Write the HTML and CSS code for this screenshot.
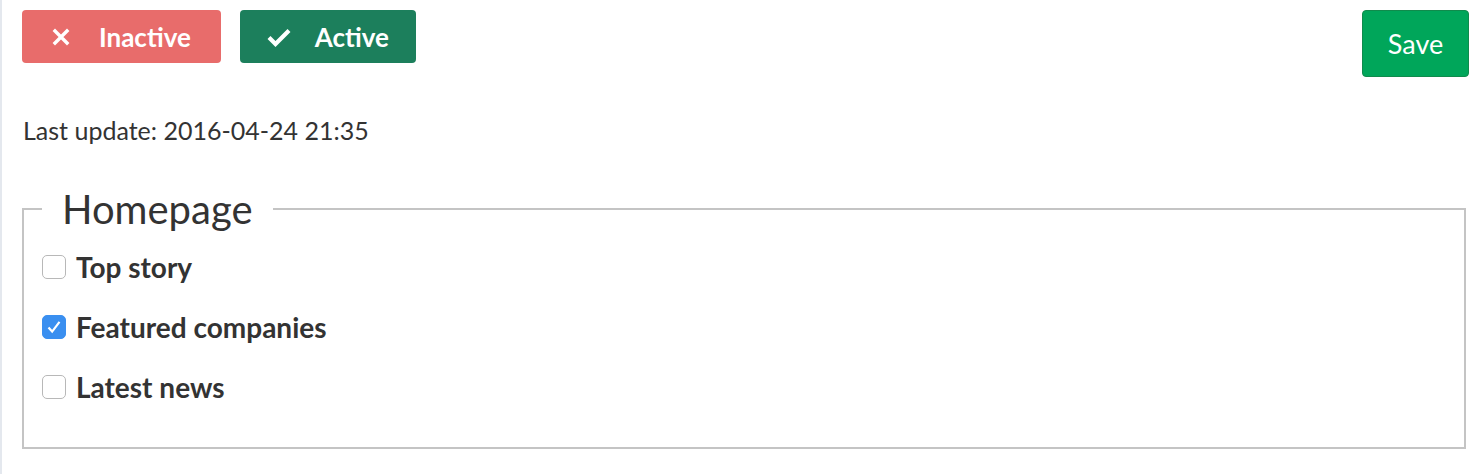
FILE: index.html
```html
<!DOCTYPE html>
<html lang="en">
<head>
    <meta charset="UTF-8">
    <meta name="viewport" content="width=device-width, initial-scale=1.0">
    <title>Homepage placement</title>
    <link rel="stylesheet" href="styles.css">
</head>
<body>
    <div class="page">
        <div class="toolbar">
            <div class="status-buttons">
                <button class="status inactive">
                    <svg class="icon" viewBox="0 0 18 18" width="18" height="18">
                        <path d="M3 3 L15 15 M15 3 L3 15" stroke="#fff" stroke-width="3.4" stroke-linecap="square" fill="none"/>
                    </svg>
                    <span>Inactive</span>
                </button>
                <button class="status active">
                    <svg class="icon" viewBox="0 0 24 20" width="24" height="20">
                        <path d="M2 10.5 L8.5 17 L22 3.5" stroke="#fff" stroke-width="4.2" stroke-linejoin="miter" fill="none"/>
                    </svg>
                    <span>Active</span>
                </button>
            </div>
            <button class="save">Save</button>
        </div>

        <p class="last-update">Last update: 2016-04-24 21:35</p>

        <fieldset class="placement">
            <legend>Homepage</legend>
            <label class="option"><input type="checkbox"> Top story</label>
            <label class="option"><input type="checkbox" checked> Featured companies</label>
            <label class="option"><input type="checkbox"> Latest news</label>
        </fieldset>
    </div>
</body>
</html>
```

FILE: styles.css
```css
/* General Styling */
body {
    margin: 0;
    padding: 0;
    font-family: Lato, "Open Sans", sans-serif;
    background-color: #ffffff;
    color: #333333;
}

.page {
    border-left: 2px solid #e4e8ee;
    padding: 10px 11px 0 20px;
    height: 474px;
    box-sizing: border-box;
}

/* Top bar */
.toolbar {
    display: flex;
    justify-content: space-between;
    align-items: flex-start;
}

.status-buttons {
    display: flex;
    gap: 19px;
}

.status {
    display: flex;
    align-items: center;
    height: 53px;
    padding: 0 30px;
    border: none;
    border-radius: 4px;
    color: white;
    font-family: inherit;
    font-size: 26px;
    font-weight: bold;
    cursor: pointer;
}

.inactive {
    background-color: #e86c6b;
}

.inactive .icon {
    margin-right: 29px;
}

.active {
    padding: 0 27px;
    background-color: #1c7f5c;
}

.active .icon {
    margin-right: 24px;
}

.save {
    width: 107px;
    height: 67px;
    border: 1px solid #108b4c;
    border-radius: 4px;
    background-color: #00a65a;
    color: white;
    font-family: inherit;
    font-size: 27px;
    cursor: pointer;
}

.last-update {
    margin: 38px 0 0 1px;
    font-size: 25px;
}

/* Homepage fieldset */
.placement {
    margin: 40px 3px 0 0;
    padding: 4px 18px 30px 18px;
    border: 2px solid #c4c4c4;
}

.placement legend {
    margin-left: 0;
    padding: 0 20px;
    font-size: 40px;
    font-weight: 400;
}

.option {
    display: flex;
    align-items: center;
    height: 60px;
    font-size: 28px;
    font-weight: bold;
}

.option input {
    appearance: none;
    -webkit-appearance: none;
    width: 24px;
    height: 24px;
    margin: 0 10px 0 0;
    border: 1px solid #b8b8b8;
    border-radius: 5px;
    background: #fff;
}

.option input:checked {
    border-color: #3a8ff0;
    background: #3a8ff0 url("data:image/svg+xml,%3Csvg xmlns='http://www.w3.org/2000/svg' viewBox='0 0 24 24'%3E%3Cpath d='M6 12.5 L10 17 L18 6.5' stroke='white' stroke-width='2.4' fill='none'/%3E%3C/svg%3E") center / 100% no-repeat;
}
```
